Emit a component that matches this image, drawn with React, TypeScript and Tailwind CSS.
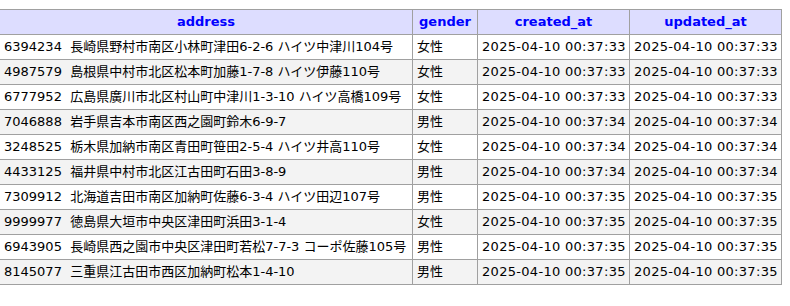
const rows = [
    { zip: '6394234', address: '長崎県野村市南区小林町津田6-2-6 ハイツ中津川104号', gender: '女性', created: '2025-04-10 00:37:33', updated: '2025-04-10 00:37:33' },
    { zip: '4987579', address: '島根県中村市北区松本町加藤1-7-8 ハイツ伊藤110号', gender: '女性', created: '2025-04-10 00:37:33', updated: '2025-04-10 00:37:33' },
    { zip: '6777952', address: '広島県廣川市北区村山町中津川1-3-10 ハイツ高橋109号', gender: '女性', created: '2025-04-10 00:37:33', updated: '2025-04-10 00:37:33' },
    { zip: '7046888', address: '岩手県吉本市南区西之園町鈴木6-9-7', gender: '男性', created: '2025-04-10 00:37:34', updated: '2025-04-10 00:37:34' },
    { zip: '3248525', address: '栃木県加納市南区青田町笹田2-5-4 ハイツ井高110号', gender: '女性', created: '2025-04-10 00:37:34', updated: '2025-04-10 00:37:34' },
    { zip: '4433125', address: '福井県中村市北区江古田町石田3-8-9', gender: '男性', created: '2025-04-10 00:37:34', updated: '2025-04-10 00:37:34' },
    { zip: '7309912', address: '北海道吉田市南区加納町佐藤6-3-4 ハイツ田辺107号', gender: '男性', created: '2025-04-10 00:37:35', updated: '2025-04-10 00:37:35' },
    { zip: '9999977', address: '徳島県大垣市中央区津田町浜田3-1-4', gender: '女性', created: '2025-04-10 00:37:35', updated: '2025-04-10 00:37:35' },
    { zip: '6943905', address: '長崎県西之園市中央区津田町若松7-7-3 コーポ佐藤105号', gender: '男性', created: '2025-04-10 00:37:35', updated: '2025-04-10 00:37:35' },
    { zip: '8145077', address: '三重県江古田市西区加納町松本1-4-10', gender: '男性', created: '2025-04-10 00:37:35', updated: '2025-04-10 00:37:35' },
];

export default function App() {
    return (
        <div className="w-[790px] h-[306px] bg-white pt-[9px] overflow-hidden font-['DejaVu_Sans','Noto_Sans_CJK_JP',sans-serif] text-[13px] leading-[16px] text-black">
            <table className="table-fixed border-collapse ml-[-1px] w-[783px]">
                <colgroup>
                    <col className="w-[413px]" />
                    <col className="w-[65px]" />
                    <col className="w-[152px]" />
                    <col className="w-[152px]" />
                </colgroup>
                <thead>
                    <tr className="bg-[#ddddff]">
                        <th className="border border-[#a0a0a0] px-1 py-1 font-bold text-[#0000ff] text-center">address</th>
                        <th className="border border-[#a0a0a0] px-1 py-1 font-bold text-[#0000ff] text-center">gender</th>
                        <th className="border border-[#a0a0a0] px-1 py-1 font-bold text-[#0000ff] text-center">created_at</th>
                        <th className="border border-[#a0a0a0] px-1 py-1 font-bold text-[#0000ff] text-center">updated_at</th>
                    </tr>
                </thead>
                <tbody>
                    {rows.map((row, i) => (
                        <tr key={row.zip} className={i % 2 === 1 ? 'bg-[#f3f3f3]' : 'bg-white'}>
                            <td className="border border-[#a0a0a0] px-1 py-1 whitespace-pre">{row.zip}{'  '}{row.address}</td>
                            <td className="border border-[#a0a0a0] px-1 py-1 whitespace-nowrap">{row.gender}</td>
                            <td className="border border-[#a0a0a0] px-1 py-1 whitespace-nowrap tracking-[0.3px]">{row.created}</td>
                            <td className="border border-[#a0a0a0] px-1 py-1 whitespace-nowrap tracking-[0.3px]">{row.updated}</td>
                        </tr>
                    ))}
                </tbody>
            </table>
        </div>
    );
}
